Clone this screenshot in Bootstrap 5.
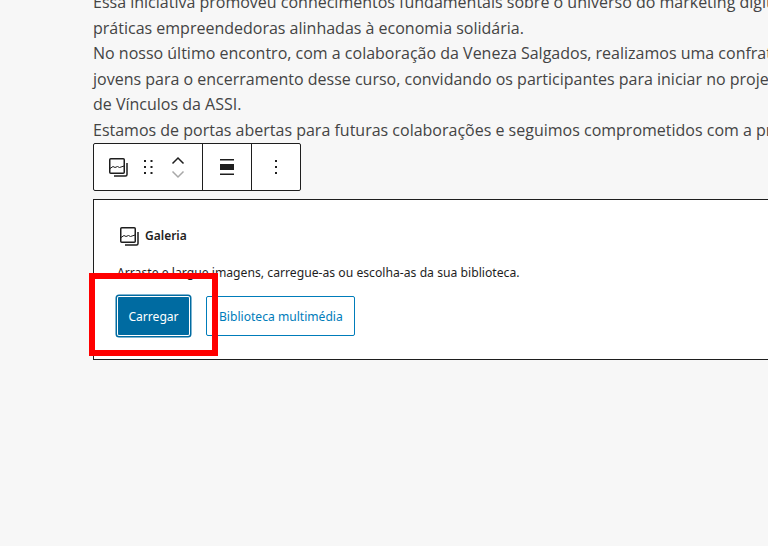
<!DOCTYPE html>
<html lang="pt">
<head>
<meta charset="utf-8">
<title>Galeria</title>
<link href="https://cdn.jsdelivr.net/npm/bootstrap@5.3.0/dist/css/bootstrap.min.css" rel="stylesheet">
<style>
html,body{height:100%;}
body{background:#f7f7f7;overflow:hidden;font-family:"Noto Sans",sans-serif;}
.canvas{width:920px;margin-left:93px;margin-top:-10px;}
.copy{font-family:"Open Sans",sans-serif;font-size:16px;line-height:25.5px;height:25.5px;color:#444;white-space:nowrap;margin:0;}
.tools{height:48px;width:208px;border:1px solid #1e1e1e;border-radius:2px;background:#fff;}
.tool-group{height:100%;border-right:1px solid #1e1e1e;}
.tool-group:last-child{border-right:0;}
.group-a{width:109px;padding-left:12px;}
.group-b{width:49px;}
.group-c{flex:1;}
.grip{margin-left:6px;}
.movers{width:24px;margin-left:6px;gap:5px;}
.gallery-box{height:161px;width:100%;border:1px solid #1e1e1e;border-right:0;background:#fff;margin-top:8px;padding:24px 23px;position:relative;color:#1e1e1e;}
.ph-title{font-size:12px;font-weight:600;line-height:24px;gap:4px;}
.ph-text{font-size:12.2px;line-height:18px;margin:16px 0 14px;white-space:nowrap;color:#1e1e1e;}
.wp-btn{height:40px;font-size:12.1px;border-radius:2px;padding:1px 12px 0;line-height:38px;white-space:nowrap;}
.wp-primary{width:73px;background:#006ba1;color:#fff;border:0;padding:1px 0 0;box-shadow:inset 0 0 0 1px #fff,0 0 0 1.5px #006ba1;line-height:38px;text-align:center;}
.wp-secondary{width:149px;background:#fff;color:#007cba;border:1px solid #007cba;}
.highlight{position:absolute;left:-5px;top:73px;width:129px;height:83px;border:6px solid #f00;pointer-events:none;}
</style>
</head>
<body>
<div class="canvas">
  <p class="copy">Essa iniciativa promoveu conhecimentos fundamentais sobre o universo do marketing digital e</p>
  <p class="copy">práticas empreendedoras alinhadas à economia solidária.</p>
  <p class="copy">No nosso último encontro, com a colaboração da Veneza Salgados, realizamos uma confraternização com os</p>
  <p class="copy">jovens para o encerramento desse curso, convidando os participantes para iniciar no projeto de Fortalecimento</p>
  <p class="copy">de Vínculos da ASSI.</p>
  <p class="copy">Estamos de portas abertas para futuras colaborações e seguimos comprometidos com a promoção</p>

  <div class="tools d-flex">
    <div class="tool-group group-a d-flex align-items-center">
      <svg width="24" height="24" viewBox="0 0 24 24" fill="none" stroke="#1e1e1e" stroke-width="1.5"><rect x="3.75" y="3.75" width="14.5" height="14.5" rx="1"/><path d="M21 8v11.5a1.5 1.5 0 0 1-1.5 1.5H8"/><path d="M4 13.500 7 11.500l2 1 2.500-1 2 1 4.500-1.500" stroke-width="1"/></svg>
      <svg class="grip" width="24" height="24" viewBox="0 0 24 24" fill="#1e1e1e"><rect x="8" y="5" width="2" height="2"/><rect x="14.500" y="5" width="2" height="2"/><rect x="8" y="11" width="2" height="2"/><rect x="14.500" y="11" width="2" height="2"/><rect x="8" y="17" width="2" height="2"/><rect x="14.500" y="17" width="2" height="2"/></svg>
      <div class="movers d-flex flex-column align-items-center">
        <svg width="14" height="9" viewBox="0 0 14 9" fill="none" stroke="#1e1e1e" stroke-width="1.5"><path d="M1.500 7.500 7 2l5.500 5.500"/></svg>
        <svg width="14" height="9" viewBox="0 0 14 9" fill="none" stroke="#a8a8a8" stroke-width="1.5"><path d="M1.500 1.500 7 7l5.500-5.500"/></svg>
      </div>
    </div>
    <div class="tool-group group-b d-flex align-items-center justify-content-center">
      <svg width="24" height="24" viewBox="0 0 24 24" fill="#1e1e1e"><rect x="5" y="4" width="14" height="1.500"/><rect x="5" y="9" width="14" height="6"/><rect x="5" y="18.500" width="14" height="1.500"/></svg>
    </div>
    <div class="tool-group group-c d-flex align-items-center justify-content-center">
      <svg width="24" height="24" viewBox="0 0 24 24" fill="#1e1e1e"><rect x="11" y="5" width="2" height="2"/><rect x="11" y="11" width="2" height="2"/><rect x="11" y="17" width="2" height="2"/></svg>
    </div>
  </div>

  <div class="gallery-box">
    <div class="ph-title d-flex align-items-center">
      <svg width="24" height="24" viewBox="0 0 24 24" fill="none" stroke="#1e1e1e" stroke-width="1.5"><rect x="3.750" y="3.750" width="14.500" height="14.500" rx="1"/><path d="M21 8v11.500a1.500 1.500 0 0 1-1.500 1.500H8"/><path d="M4 13.500 7 11.500l2 1 2.500-1 2 1 4.500-1.500" stroke-width="1"/></svg>
      <span>Galeria</span>
    </div>
    <p class="ph-text">Arraste e largue imagens, carregue-as ou escolha-as da sua biblioteca.</p>
    <div class="d-flex gap-3">
      <button type="button" class="btn wp-btn wp-primary">Carregar</button>
      <button type="button" class="btn wp-btn wp-secondary">Biblioteca multimédia</button>
    </div>
    <div class="highlight"></div>
  </div>
</div>
</body>
</html>
